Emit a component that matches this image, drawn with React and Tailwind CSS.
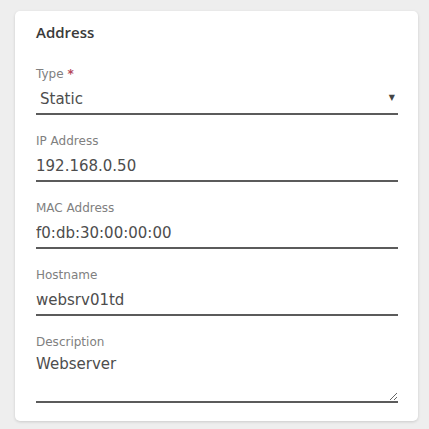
import React from "react";

const fields = [
  { label: "IP Address", value: "192.168.0.50" },
  { label: "MAC Address", value: "f0:db:30:00:00:00" },
  { label: "Hostname", value: "websrv01td" },
];

const Field = ({ label, value }) => (
  <div className="mt-[18px]">
    <div className="h-4 text-[12px] leading-4 text-[#808080]">{label}</div>
    <input
      readOnly
      value={value}
      className="block w-full h-[33px] pt-[6px] pb-[3px] border-b-2 border-[#5b5b5b] bg-transparent text-[15px] leading-[22px] text-[#4d4d4d] outline-none"
    />
  </div>
);

const App = () => {
  return (
    <div
      className="w-[429px] h-[429px] bg-[#eeeeee] pt-[11px] pl-[15px]"
      style={{ fontFamily: '"DejaVu Sans", sans-serif' }}
    >
      <div className="w-[403px] h-[410px] bg-white rounded-[5px] shadow-[0_1px_3px_rgba(0,0,0,0.15)] pl-[21px] pr-[20px] pt-[10px]">
        <h2
          className="text-[15px] leading-[22px] font-semibold text-[#3a3a3a]"
          style={{ fontFamily: '"Open Sans", sans-serif' }}
        >
          Address
        </h2>

        <div className="mt-[23px]">
          <div className="h-4 text-[12px] leading-4 text-[#808080]">
            Type <span className="text-[#b5485a] font-bold">*</span>
          </div>
          <div className="flex items-center justify-between h-[33px] pt-[6px] pb-[3px] pl-1 border-b-2 border-[#5b5b5b] text-[15px] leading-[22px] text-[#4d4d4d]">
            <span>Static</span>
            <span className="text-[8px] text-[#444444] mr-[3px] -mt-[2px]">▼</span>
          </div>
        </div>

        {fields.map((field) => (
          <Field key={field.label} label={field.label} value={field.value} />
        ))}

        <div className="mt-[18px]">
          <div className="h-4 text-[12px] leading-4 text-[#808080]">
            Description
          </div>
          <textarea
            readOnly
            value="Webserver"
            className="block w-full h-[53px] pt-[3px] border-b-2 border-[#5b5b5b] bg-transparent text-[15px] leading-[22px] text-[#4d4d4d] outline-none"
          />
        </div>
      </div>
    </div>
  );
};

export default App;
